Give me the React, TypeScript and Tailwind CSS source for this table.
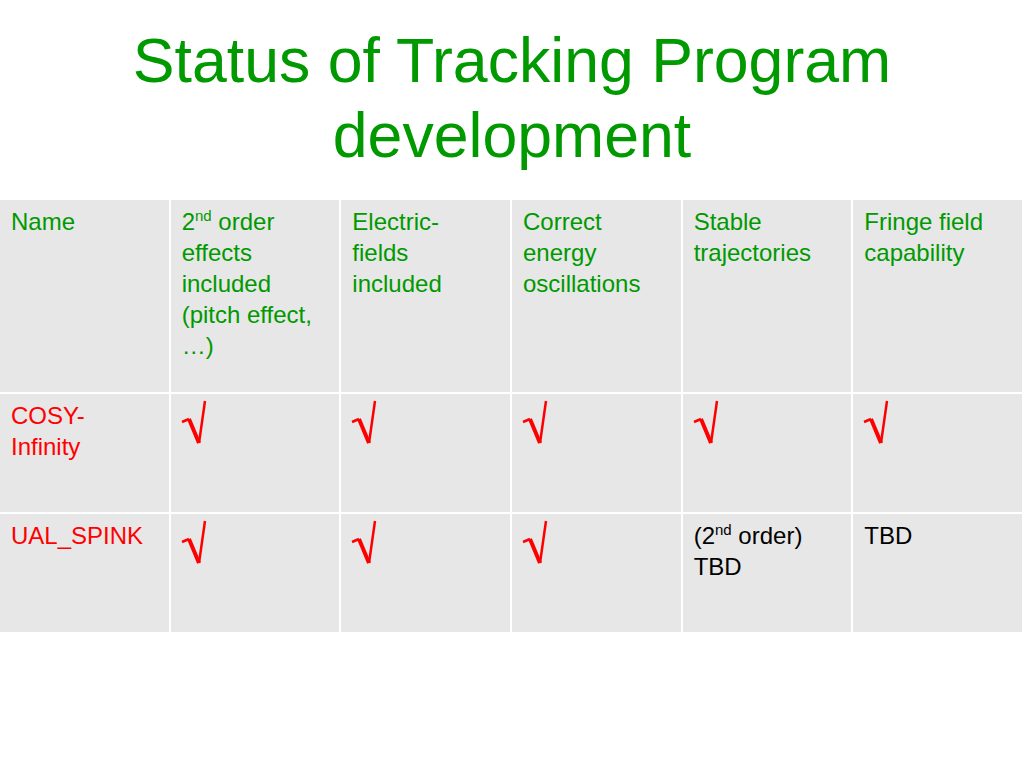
import React from "react";

const Check = () => (
  <svg width="27" height="46" viewBox="0 0 27 46" className="block -ml-px">
    <path d="M1 22 L8 19" stroke="#ff0000" strokeWidth="2.5" fill="none" />
    <path d="M8 19 L18 43" stroke="#ff0000" strokeWidth="4" fill="none" />
    <path d="M18 43 L24 1" stroke="#ff0000" strokeWidth="2.5" fill="none" />
  </svg>
);

const Cell = ({ children, className = "" }: { children?: React.ReactNode; className?: string }) => (
  <div className={`bg-[#e7e7e7] pl-[11px] pr-[20px] pt-[6px] ${className}`}>{children}</div>
);

const Nd = () => <sup className="text-[15px] leading-none -top-[9px]">nd</sup>;

const headers: React.ReactNode[] = [
  "Name",
  <>
    2<Nd /> order effects included (pitch effect, …)
  </>,
  "Electric-fields included",
  "Correct energy oscillations",
  "Stable trajectories",
  "Fringe field capability",
];

const App = () => {
  return (
    <div className="w-[1024px] h-[768px] bg-white overflow-hidden font-['Liberation_Sans',Arial,sans-serif]">
      <h1 className="pt-[23px] text-center text-[62.6px] leading-[75px] text-[#009900] font-normal">
        Status of Tracking Program
        <br />
        development
      </h1>
      <div className="mt-[27px] w-[1022px] grid grid-cols-6 grid-rows-[192px_118px_118px] gap-[2px] text-[24px] leading-[31px]">
        {headers.map((h, i) => (
          <Cell key={i} className="text-[#009900]">
            {h}
          </Cell>
        ))}

        <Cell className="text-[#ff0000]">COSY-Infinity</Cell>
        {[0, 1, 2, 3, 4].map((i) => (
          <Cell key={i}>
            <Check />
          </Cell>
        ))}

        <Cell className="text-[#ff0000]">UAL_SPINK</Cell>
        {[0, 1, 2].map((i) => (
          <Cell key={i}>
            <Check />
          </Cell>
        ))}
        <Cell className="text-black">
          (2<Nd /> order) TBD
        </Cell>
        <Cell className="text-black">TBD</Cell>
      </div>
    </div>
  );
};

export default App;
